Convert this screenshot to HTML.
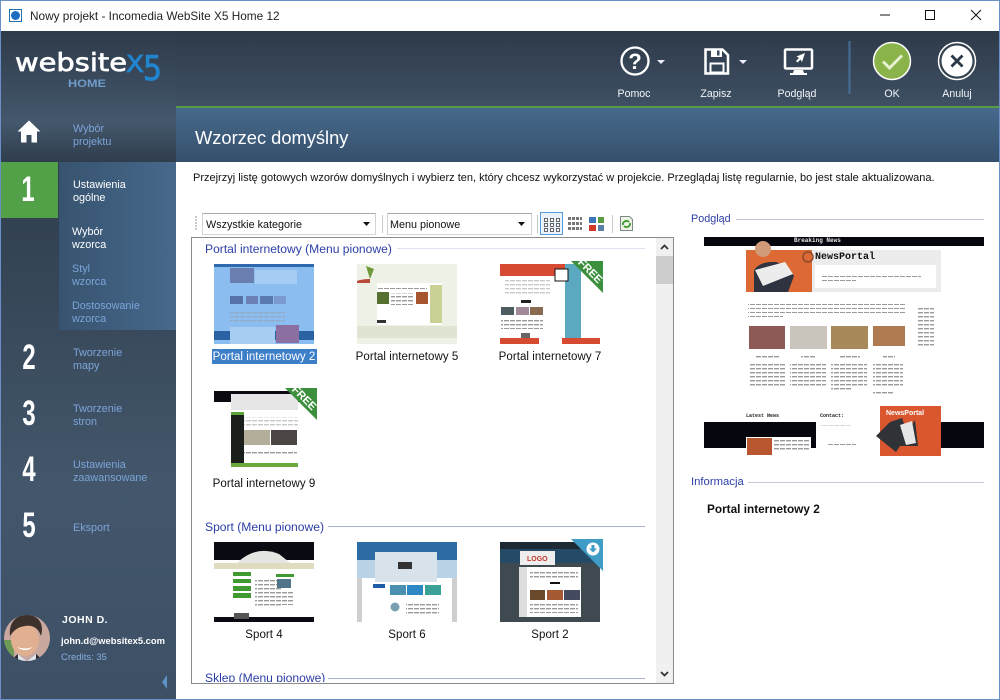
<!DOCTYPE html>
<html><head><meta charset="utf-8"><style>
html,body{margin:0;padding:0;width:1000px;height:700px;overflow:hidden;background:#fff}
body{position:relative;font-family:"Liberation Sans",sans-serif;font-size:12px}
div{position:absolute;box-sizing:border-box}
.t{white-space:nowrap;line-height:13px}
.s{font-size:10.8px;color:#7ba5d8}
.w{color:#fff}
.n{font:bold 35px/35px "Liberation Sans",sans-serif;color:#fff;width:40px;text-align:center;transform:scaleX(.68)}
.tb{color:#f2f5f8;font-size:10.6px;text-align:center;width:70px;top:88px;line-height:13px}
.h{color:#2b3ea6;font-size:12.1px;white-space:nowrap;line-height:14px}
.l{color:#111;font-size:11.5px;letter-spacing:.05px;text-align:center;width:130px;line-height:14px;white-space:nowrap}
svg{position:absolute;left:0;top:0}
</style></head><body>
<div style="left:0;top:0;width:1000px;height:700px;border:1px solid #6d8fc8"></div>
<div style="left:1px;top:31px;width:175px;height:131px;background:linear-gradient(#2e3b4a,#44576c 70%,#2f3d4c)"></div>
<div style="left:176px;top:31px;width:823px;height:75px;background:linear-gradient(#2d3a49,#3f5064)"></div>
<div style="left:176px;top:106px;width:823px;height:2px;background:#5c9b45"></div>
<div style="left:176px;top:108px;width:823px;height:54px;background:linear-gradient(#47698c,#35506c)"></div>
<div style="left:1px;top:162px;width:175px;height:537px;background:linear-gradient(#2f3d4c,#43566b 60%,#3d5066)"></div>
<div style="left:59px;top:162px;width:117px;height:168px;background:linear-gradient(90deg,#37536f,#47698c)"></div>
<div style="left:1px;top:162px;width:57px;height:56px;background:#52a048"></div>

<svg width="1000" height="700" viewBox="0 0 1000 700" font-family="Liberation Sans, sans-serif">
<defs>
<pattern id="ln" width="6" height="4" patternUnits="userSpaceOnUse"><rect width="5" height="1.4" fill="#9a9a9a"/></pattern>
<pattern id="ld" width="6" height="4" patternUnits="userSpaceOnUse"><rect width="5" height="1.4" fill="#c9c9c9"/></pattern>
<pattern id="dot" width="3" height="3" patternUnits="userSpaceOnUse"><rect width="2" height="2" fill="#c8c8c8"/></pattern>
</defs>
<!-- app icon -->
<rect x="9.500" y="9.500" width="12" height="12" fill="#fff" stroke="#1d6fb0"/>
<circle cx="15.500" cy="15.500" r="4.500" fill="#1c6dc0"/>
<!-- window controls -->
<path d="M880 15H890" stroke="#111" stroke-width="1"/>
<rect x="925.500" y="10.500" width="9" height="9" fill="none" stroke="#111"/>
<path d="M971 10L981 20M981 10L971 20" stroke="#111" fill="none"/>
<!-- logo -->
<text x="15" y="71" font-size="25" fill="#fff" stroke="#fff" stroke-width=".7" textLength="112" lengthAdjust="spacingAndGlyphs" font-family="DejaVu Sans, sans-serif">website</text>
<text x="126" y="72" font-size="23" fill="#2185cf" stroke="#2185cf" stroke-width=".8" textLength="18" lengthAdjust="spacingAndGlyphs" font-family="DejaVu Sans, sans-serif">X</text>
<text x="143" y="80" font-size="34" fill="#2185cf" stroke="#2185cf" stroke-width=".8" textLength="19" lengthAdjust="spacingAndGlyphs" font-family="DejaVu Sans, sans-serif">5</text>
<text x="68" y="87" font-size="11" font-weight="bold" fill="#6f9bc8" textLength="38" lengthAdjust="spacingAndGlyphs">HOME</text>
<!-- home -->
<path d="M29 120.500L40.500 131.500H37V142.500H31.500V135H26.500V142.500H21V131.500H17.500Z" fill="#fff"/>
<!-- toolbar icons -->
<circle cx="635" cy="61" r="13.500" fill="none" stroke="#fff" stroke-width="2.300"/>
<text x="635" y="69" font-size="22" font-weight="bold" fill="#fff" text-anchor="middle">?</text>
<path d="M657 60h8l-4 4zM739 60h8l-4 4z" fill="#eef"/>
<path d="M705.500 49.500H722.500L728 55V73.500H705.500Z" fill="none" stroke="#fff" stroke-width="2.500"/>
<rect x="711" y="49" width="11" height="8" fill="#fff"/><rect x="717" y="50.500" width="2.500" height="5" fill="#3a4a5c"/>
<rect x="710.500" y="63.500" width="13" height="9" fill="none" stroke="#fff" stroke-width="2"/>
<rect x="785" y="49.500" width="27" height="19" rx="1" fill="none" stroke="#fff" stroke-width="2.500"/>
<path d="M794 70h9l1 3h3v2h-17v-2h3z" fill="#fff"/>
<path d="M805 53l-3 9-1.500-2.500-3 3-1.500-1.500 3-3-2.500-1.500z" fill="#fff"/>
<rect x="848.500" y="41" width="2" height="53" fill="#466f97"/>
<circle cx="892" cy="61" r="18.500" fill="#8ab34a" stroke="#fff" stroke-width="1.500"/>
<path d="M883 61.500L889.500 68L902 55.500" fill="none" stroke="#e6f0d0" stroke-width="3"/>
<circle cx="957" cy="61" r="18.500" fill="#34434f" stroke="#fff" stroke-width="1.500"/>
<circle cx="957" cy="61" r="15.500" fill="#fff"/>
<path d="M951.500 55.500L962.500 66.500M962.500 55.500L951.500 66.500" stroke="#2c3a48" stroke-width="2.800"/>
<!-- avatar -->
<circle cx="27" cy="638" r="23" fill="#c9a8a0"/>
<clipPath id="av"><circle cx="27" cy="638" r="23"/></clipPath>
<g clip-path="url(#av)">
<rect x="4" y="640" width="10" height="16" fill="#6d9a55"/>
<ellipse cx="25" cy="640" rx="14" ry="16" fill="#e0b090"/>
<path d="M10 636C8 620 20 613 30 615S44 625 41 636C38 627 32 625 25 626S14 630 10 636Z" fill="#3d322b"/>
<path d="M17 647q8 6 16 0q-8 3-16 0z" fill="#fff"/>
<path d="M10 661l8-7 9 7zM27 661l9-7 8 7z" fill="#2a2c33"/>
<path d="M18 654l9 7 9-7 0 7h-18z" fill="#dfe4ea"/>
</g>
<path d="M167 675V689L162 682Z" fill="#5f93c8"/>
<!-- toolbar (content) -->
<rect x="194" y="216" width="3" height="14" fill="url(#dot)"/>
<rect x="202.500" y="213.500" width="173" height="21" fill="#fff" stroke="#d4d4d4"/>
<path d="M202.500 213.500H375.500" stroke="#a8a8a8"/>
<path d="M363 222h7l-3.500 4z" fill="#111"/>
<rect x="387.500" y="213.500" width="144" height="21" fill="#fff" stroke="#d4d4d4"/>
<path d="M387.500 213.500H531.500" stroke="#a8a8a8"/>
<path d="M518 222h7l-3.500 4z" fill="#111"/>
<rect x="382" y="215" width="1" height="18" fill="#c8c8c8"/>
<rect x="537" y="215" width="1" height="18" fill="#c8c8c8"/>
<rect x="612" y="215" width="1" height="18" fill="#c8c8c8"/>
<rect x="540.500" y="212.500" width="22" height="22" fill="#eaf3fb" stroke="#5a9ad8"/>
<g fill="#fff" stroke="#666" stroke-width="1">
<rect x="544.500" y="218.500" width="3" height="3"/><rect x="550.500" y="218.500" width="3" height="3"/><rect x="556.500" y="218.500" width="3" height="3"/>
<rect x="544.500" y="223.500" width="3" height="3"/><rect x="550.500" y="223.500" width="3" height="3"/><rect x="556.500" y="223.500" width="3" height="3"/>
<rect x="544.500" y="228.500" width="3" height="3"/><rect x="550.500" y="228.500" width="3" height="3"/><rect x="556.500" y="228.500" width="3" height="3"/>
</g>
<g fill="#777">
<rect x="568" y="217" width="3" height="3"/><rect x="572" y="217" width="3" height="3"/><rect x="576" y="217" width="3" height="3"/><rect x="580" y="217" width="2" height="3"/>
<rect x="568" y="222" width="3" height="3"/><rect x="572" y="222" width="3" height="3"/><rect x="576" y="222" width="3" height="3"/><rect x="580" y="222" width="2" height="3"/>
<rect x="568" y="227" width="3" height="3"/><rect x="572" y="227" width="3" height="3"/><rect x="576" y="227" width="3" height="3"/><rect x="580" y="227" width="2" height="3"/>
</g>
<rect x="589" y="217" width="7" height="6" fill="#3c78b8"/><rect x="598" y="217" width="6" height="6" fill="#5a9a40"/><rect x="589" y="225" width="7" height="6" fill="#d03a28"/><rect x="598" y="225" width="6" height="6" fill="#5a7fa8"/>
<path d="M620.500 216.500H629.500L632.500 219.500V230.500H620.500Z" fill="#eef3e6" stroke="#7a8a8a"/>
<path d="M623 225a3.500 3.500 0 0 1 6-3M630 223a3.500 3.500 0 0 1-6 3" fill="none" stroke="#3f9a30" stroke-width="1.800"/>
<!-- list frame -->
<rect x="191.500" y="237.500" width="482" height="446" fill="#fff" stroke="#8b8b8b"/>
<rect x="656" y="238" width="17" height="445" fill="#f0f0f0"/>
<rect x="656" y="256" width="17" height="28" fill="#cdcdcd"/>
<path d="M661 249l3.500-3.500 3.500 3.500" fill="none" stroke="#333" stroke-width="1.800"/>
<path d="M661 672l3.500 3.500 3.500-3.500" fill="none" stroke="#333" stroke-width="1.800"/>
<rect x="397" y="248" width="248" height="1" fill="#dfe2ee"/>
<rect x="328" y="526" width="317" height="1" fill="#a9b2dd"/>
<rect x="328" y="678" width="317" height="1" fill="#a9b2dd"/>
<rect x="736" y="219" width="248" height="1" fill="#c3c8d6"/>
<rect x="748" y="482" width="236" height="1" fill="#c3c8d6"/>

<!-- thumb 1: selected -->
<rect x="214" y="264" width="100" height="80" fill="#8cbdf0"/>
<rect x="214" y="264" width="100" height="3" fill="#2e69ad"/>
<rect x="230" y="268" width="24" height="15" fill="#6a7fb0"/><rect x="255" y="270" width="42" height="14" fill="#a6ccf3"/>
<rect x="230" y="296" width="13" height="8" fill="#5571a8"/><rect x="246" y="296" width="12" height="8" fill="#6b80b5"/><rect x="260" y="296" width="13" height="8" fill="#5a79ad"/><rect x="274" y="296" width="12" height="8" fill="#7a9ad0"/>
<rect x="230" y="310" width="55" height="12" fill="url(#ln)" opacity=".5"/>
<rect x="214" y="331" width="100" height="9" fill="#2a62a3"/>
<rect x="230" y="327" width="45" height="17" fill="#a8cdf3"/>
<rect x="276" y="325" width="23" height="18" fill="#8a6fa0"/>
<!-- thumb 2 -->
<rect x="357" y="264" width="100" height="80" fill="#eef1e6"/>
<path d="M357 281q5-2 13-2v4h-13z" fill="#b84a3a"/><path d="M366 266l4 13 4-10z" fill="#6f9a3a"/>
<rect x="377" y="283" width="65" height="42" fill="#fff"/>
<rect x="377" y="292" width="12" height="12" fill="#55702f"/><rect x="416" y="292" width="12" height="12" fill="#a6552f"/>
<rect x="430" y="285" width="12" height="38" fill="#c9d195"/>
<rect x="391" y="293" width="23" height="12" fill="url(#ln)"/><rect x="377" y="286" width="50" height="3" fill="url(#ln)"/>
<rect x="377" y="320" width="9" height="3" fill="#333"/>
<rect x="357" y="326" width="100" height="12" fill="#dfe5d2"/>
<!-- thumb 3 -->
<rect x="500" y="264" width="100" height="80" fill="#fff"/>
<rect x="500" y="264" width="65" height="12" fill="#d74a32"/>
<rect x="565" y="264" width="16" height="80" fill="#5aa9c0"/>
<rect x="500" y="338" width="39" height="6" fill="#d74a32"/><rect x="562" y="338" width="38" height="6" fill="#d74a32"/>
<rect x="555" y="269" width="13" height="12" fill="#fff" stroke="#111"/>
<rect x="505" y="280" width="45" height="16" fill="url(#ld)"/>
<rect x="521" y="300" width="10" height="3" fill="#222"/>
<rect x="501" y="307" width="13" height="8" fill="#4d5a60"/><rect x="516" y="307" width="13" height="8" fill="#a08a9a"/><rect x="530" y="307" width="13" height="8" fill="#8a6a50"/>
<rect x="501" y="319" width="42" height="10" fill="url(#ln)"/>
<rect x="521" y="333" width="9" height="5" fill="#666"/>
<path d="M571 261H603V293Z" fill="#3c8f3c"/>
<text transform="translate(587 270) rotate(45)" font-size="11" font-weight="bold" fill="#fff" text-anchor="middle" x="3" y="2">FREE</text>
<!-- thumb 4 -->
<rect x="214" y="391" width="100" height="80" fill="#fff"/>
<rect x="214" y="391" width="100" height="11" fill="#0a0a10"/>
<rect x="231" y="394" width="67" height="16" fill="#e6e6e6"/>
<rect x="231" y="410" width="67" height="56" fill="#fff"/>
<rect x="231" y="412" width="13" height="54" fill="#1b1f1b"/><rect x="231" y="412" width="13" height="3" fill="#5da43c"/>
<rect x="244" y="417" width="54" height="9" fill="url(#ld)"/>
<rect x="244" y="430" width="26" height="15" fill="#b3ae9a"/><rect x="271" y="430" width="26" height="15" fill="#4b4543"/>
<rect x="244" y="451" width="53" height="5" fill="url(#ln)"/>
<rect x="231" y="463" width="67" height="4" fill="#6aa83e"/>
<path d="M285 388H317V420Z" fill="#3c8f3c"/>
<text transform="translate(301 397) rotate(45)" font-size="11" font-weight="bold" fill="#fff" text-anchor="middle" x="3" y="2">FREE</text>
<!-- sport 4 -->
<rect x="214" y="542" width="100" height="80" fill="#fff"/>
<rect x="214" y="542" width="100" height="18" fill="#0a0a12"/>
<path d="M234 566q20-22 45-12l15 12z" fill="#e4e6e2"/>
<rect x="214" y="563" width="100" height="6" fill="#e0dcc0"/>
<rect x="233" y="572" width="18" height="4" fill="#3f9a30"/><rect x="233" y="579" width="18" height="4" fill="#3f9a30"/><rect x="233" y="586" width="18" height="5" fill="#3f9a30"/><rect x="233" y="593" width="18" height="5" fill="#3f9a30"/>
<rect x="255" y="578" width="27" height="28" fill="url(#ln)"/>
<rect x="276" y="574" width="18" height="3" fill="#3f9a30"/><rect x="277" y="579" width="14" height="9" fill="#51748a"/>
<rect x="278" y="590" width="15" height="15" fill="url(#ln)"/>
<rect x="214" y="617" width="100" height="5" fill="#0a0a12"/>
<rect x="234" y="613" width="15" height="6" fill="#555"/>
<!-- sport 6 -->
<rect x="357" y="542" width="100" height="80" fill="#fff"/>
<rect x="357" y="542" width="100" height="30" fill="#2c6ba3"/>
<rect x="357" y="560" width="100" height="18" fill="#b9d2e6"/>
<rect x="375" y="552" width="62" height="30" fill="#d8e2ea"/>
<rect x="398" y="562" width="14" height="7" fill="#333"/>
<rect x="357" y="578" width="5" height="44" fill="#cfcfcf"/><rect x="452" y="578" width="5" height="44" fill="#cfcfcf"/>
<rect x="373" y="584" width="12" height="4" fill="#1f5ca8"/>
<rect x="390" y="585" width="16" height="10" fill="#4a90b0"/><rect x="407" y="585" width="16" height="10" fill="#2e88c4"/><rect x="425" y="585" width="16" height="10" fill="#3aa098"/>
<circle cx="395" cy="607" r="4.500" fill="#7aa0b0"/>
<rect x="406" y="604" width="33" height="10" fill="url(#ln)"/>
<!-- sport 2 -->
<rect x="500" y="542" width="100" height="80" fill="#3f4a50"/>
<rect x="500" y="542" width="100" height="7" fill="#1d2a33"/>
<rect x="500" y="549" width="100" height="14" fill="#244a66"/>
<rect x="520" y="551" width="35" height="14" fill="#eee"/>
<text x="527" y="561" font-size="7" font-weight="bold" fill="#c0382a">LOGO</text>
<rect x="519" y="567" width="62" height="50" fill="#fff"/>
<rect x="519" y="567" width="8" height="50" fill="#dedede"/>
<rect x="530" y="572" width="48" height="8" fill="url(#ln)"/>
<rect x="550" y="582" width="10" height="2" fill="#111"/>
<rect x="530" y="590" width="15" height="10" fill="#6a4a2a"/><rect x="547" y="590" width="16" height="10" fill="#a55a35"/><rect x="564" y="590" width="16" height="10" fill="#444a60"/>
<rect x="530" y="604" width="48" height="9" fill="url(#ln)"/>
<path d="M571 539H603V571Z" fill="#3f9cc6"/>
<circle cx="593" cy="549" r="6.500" fill="#fff"/>
<path d="M591.500 545h3v3.500h2.500l-4 4-4-4h2.500z" fill="#3f9cc6"/>

<!-- preview -->
<rect x="704" y="237" width="280" height="9" fill="#06060f"/>
<rect x="746" y="250" width="195" height="42" fill="#ececec"/>
<rect x="746" y="250" width="66" height="42" fill="#dd6a35"/>
<path d="M754 292V270q6-8 18-8l4 0q12 4 18 14l-6 16z" fill="#2f3340"/>
<circle cx="763" cy="249" r="8" fill="#d19a78"/>
<path d="M755 270l30-8 8 12-30 12z" fill="#ececec"/>
<rect x="815" y="265" width="121" height="23" fill="#fff"/>
<rect x="821" y="270" width="100" height="2" fill="url(#ln)"/><rect x="821" y="275" width="100" height="2" fill="url(#ln)"/><rect x="821" y="279" width="35" height="2" fill="url(#ln)"/><rect x="911" y="282" width="22" height="2" fill="url(#ln)"/>
<circle cx="808" cy="257" r="5" fill="none" stroke="#8a4a2a" stroke-width="1.500"/>
<rect x="748" y="303" width="158" height="2" fill="url(#ln)"/><rect x="748" y="307" width="158" height="2" fill="url(#ln)"/><rect x="748" y="311" width="158" height="2" fill="url(#ln)"/><rect x="748" y="315" width="35" height="2" fill="url(#ln)"/>
<rect x="917" y="308" width="17" height="40" fill="url(#ln)"/>
<rect x="749" y="326" width="36" height="23" fill="#8d5a55"/>
<rect x="790" y="326" width="37" height="23" fill="#c9c4bc"/>
<rect x="831" y="326" width="37" height="23" fill="#a88a5a"/>
<rect x="873" y="326" width="32" height="20" fill="#b07a50"/>
<rect x="755" y="355" width="25" height="3" fill="url(#ln)"/><rect x="801" y="355" width="15" height="3" fill="url(#ln)"/><rect x="840" y="355" width="20" height="3" fill="url(#ln)"/><rect x="883" y="355" width="12" height="3" fill="url(#ln)"/>
<rect x="749" y="364" width="36" height="2" fill="url(#ln)"/><rect x="749" y="368" width="36" height="2" fill="url(#ln)"/><rect x="749" y="372" width="36" height="2" fill="url(#ln)"/><rect x="749" y="376" width="36" height="2" fill="url(#ln)"/><rect x="749" y="380" width="36" height="2" fill="url(#ln)"/><rect x="749" y="384" width="36" height="2" fill="url(#ln)"/><rect x="749" y="390" width="20" height="2" fill="url(#ln)"/>
<rect x="790" y="364" width="36" height="2" fill="url(#ln)"/><rect x="790" y="368" width="36" height="2" fill="url(#ln)"/><rect x="790" y="372" width="36" height="2" fill="url(#ln)"/><rect x="790" y="376" width="36" height="2" fill="url(#ln)"/><rect x="790" y="380" width="36" height="2" fill="url(#ln)"/><rect x="790" y="384" width="36" height="2" fill="url(#ln)"/><rect x="790" y="390" width="20" height="2" fill="url(#ln)"/>
<rect x="831" y="364" width="36" height="2" fill="url(#ln)"/><rect x="831" y="368" width="36" height="2" fill="url(#ln)"/><rect x="831" y="372" width="36" height="2" fill="url(#ln)"/><rect x="831" y="376" width="36" height="2" fill="url(#ln)"/><rect x="831" y="380" width="36" height="2" fill="url(#ln)"/><rect x="831" y="384" width="36" height="2" fill="url(#ln)"/><rect x="831" y="388" width="20" height="2" fill="url(#ln)"/>
<rect x="873" y="364" width="30" height="2" fill="url(#ln)"/><rect x="873" y="368" width="30" height="2" fill="url(#ln)"/><rect x="873" y="372" width="30" height="2" fill="url(#ln)"/><rect x="873" y="376" width="30" height="2" fill="url(#ln)"/><rect x="873" y="380" width="30" height="2" fill="url(#ln)"/><rect x="873" y="384" width="30" height="2" fill="url(#ln)"/><rect x="873" y="392" width="20" height="2" fill="url(#ln)"/>
<rect x="704" y="422" width="177" height="26" fill="#06060f"/>
<rect x="941" y="422" width="43" height="26" fill="#06060f"/>
<rect x="816" y="406" width="65" height="50" fill="#fff"/>
<rect x="880" y="406" width="61" height="50" fill="#d9562f"/>
<path d="M876 436l14-14 12-4 5 14 8-12 3 26-18 0-4 6z" fill="#2f3236"/>
<path d="M900 425l12-4 4 22-10 2z" fill="#e6e6e6"/>
<rect x="746" y="437" width="65" height="19" fill="#fff"/>
<rect x="747" y="438" width="25" height="17" fill="#b8562f"/>
<rect x="746" y="426" width="62" height="2" fill="url(#ld)"/><rect x="746" y="430" width="62" height="2" fill="url(#ld)"/><rect x="746" y="434" width="62" height="2" fill="url(#ld)"/>
<rect x="773" y="440" width="36" height="12" fill="url(#ln)"/>
<rect x="820" y="425" width="30" height="2" fill="url(#ln)"/><rect x="828" y="434" width="35" height="2" fill="url(#ln)"/><rect x="828" y="438" width="35" height="2" fill="url(#ln)"/><rect x="828" y="443" width="28" height="2" fill="url(#ln)"/>
</svg>

<!-- preview text -->
<div class="t" style="left:794px;top:236px;font:bold 6px/10px 'Liberation Mono',monospace;color:#e8e8e8">Breaking News</div>
<div class="t" style="left:815px;top:251px;font:bold 10px/13px 'Liberation Mono',monospace;color:#111">NewsPortal</div>
<div class="t" style="left:746px;top:411px;font:bold 5px/10px 'Liberation Mono',monospace;color:#222">Latest News</div>
<div class="t" style="left:820px;top:411px;font:bold 5px/10px 'Liberation Mono',monospace;color:#222">Contact:</div>
<div class="t" style="left:886px;top:408px;font:bold 7px/12px 'Liberation Sans',sans-serif;color:#fff">NewsPortal</div>

<!-- title -->
<div class="t" style="left:30px;top:9px;font-size:11.8px;color:#222;line-height:14px">Nowy projekt - Incomedia WebSite X5 Home 12</div>

<!-- toolbar labels -->
<div class="tb" style="left:599px">Pomoc</div>
<div class="tb" style="left:681px">Zapisz</div>
<div class="tb" style="left:762px">Podgląd</div>
<div class="tb" style="left:857px">OK</div>
<div class="tb" style="left:922px">Anuluj</div>

<!-- sidebar -->
<div class="t s" style="left:73px;top:123px">Wybór<br>projektu</div>
<div class="t s w" style="left:73px;top:179px;color:#fff">Ustawienia<br>ogólne</div>
<div class="t s" style="left:72px;top:226px;color:#fff">Wybór<br>wzorca</div>
<div class="t s" style="left:72px;top:263px">Styl<br>wzorca</div>
<div class="t s" style="left:72px;top:300px">Dostosowanie<br>wzorca</div>
<div class="t s" style="left:73px;top:347px">Tworzenie<br>mapy</div>
<div class="t s" style="left:73px;top:403px">Tworzenie<br>stron</div>
<div class="t s" style="left:73px;top:459px">Ustawienia<br>zaawansowane</div>
<div class="t s" style="left:73px;top:522px">Eksport</div>
<div class="n" style="left:8px;top:172px">1</div>
<div class="n" style="left:9px;top:340px">2</div>
<div class="n" style="left:9px;top:396px">3</div>
<div class="n" style="left:9px;top:452px">4</div>
<div class="n" style="left:9px;top:508px">5</div>
<div class="t" style="left:62px;top:614px;font-weight:bold;font-size:10.5px;color:#fff;letter-spacing:.5px">JOHN D.</div>
<div class="t" style="left:61px;top:634px;font-weight:bold;font-size:9.4px;color:#fff">john.d@websitex5.com</div>
<div class="t" style="left:61px;top:651px;font-size:9.5px;color:#86aede">Credits: 35</div>

<!-- header -->
<div class="t" style="left:195px;top:126px;font-size:18.3px;line-height:24px;color:#fff">Wzorzec domyślny</div>
<div class="t" style="left:193px;top:172px;font-size:11px;color:#111">Przejrzyj listę gotowych wzorów domyślnych i wybierz ten, który chcesz wykorzystać w projekcie. Przeglądaj listę regularnie, bo jest stale aktualizowana.</div>

<div class="t" style="left:206px;top:219px;font-size:10.8px;color:#111">Wszystkie kategorie</div>
<div class="t" style="left:390px;top:219px;font-size:10.8px;color:#111">Menu pionowe</div>

<!-- list text -->
<div style="left:192px;top:238px;width:464px;height:444px;overflow:hidden">
<div class="h" style="left:13px;top:4px">Portal internetowy (Menu pionowe)</div>
<div style="left:20px;top:111px;width:105px;height:15px;background:#3d7ec9"></div>
<div class="l" style="left:7px;top:112px;color:#fff">Portal internetowy 2</div>
<div class="l" style="left:150px;top:112px">Portal internetowy 5</div>
<div class="l" style="left:293px;top:112px">Portal internetowy 7</div>
<div class="l" style="left:7px;top:239px">Portal internetowy 9</div>
<div class="h" style="left:13px;top:282px">Sport (Menu pionowe)</div>
<div class="l" style="left:7px;top:390px">Sport 4</div>
<div class="l" style="left:150px;top:390px">Sport 6</div>
<div class="l" style="left:293px;top:390px">Sport 2</div>
<div class="h" style="left:13px;top:433px">Sklep (Menu pionowe)</div>
</div>

<!-- right -->
<div class="h" style="left:691px;top:212px;font-size:10.8px">Podgląd</div>
<div class="h" style="left:691px;top:475px;font-size:11.3px">Informacja</div>
<div class="t" style="left:707px;top:503px;font-weight:bold;font-size:11.8px;color:#111">Portal internetowy 2</div>
</body></html>
